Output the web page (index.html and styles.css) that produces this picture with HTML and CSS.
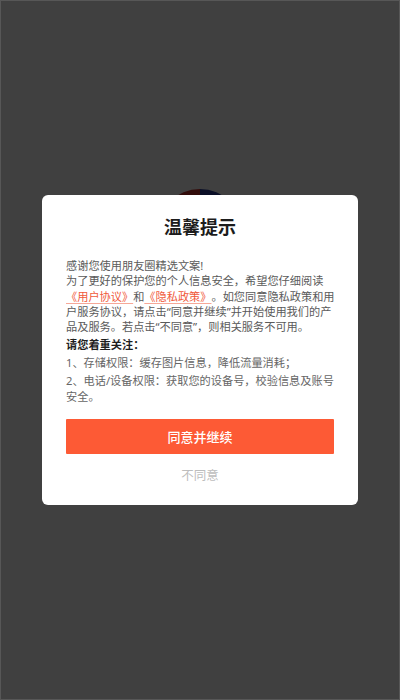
FILE: index.html
```html
<!DOCTYPE html>
<html lang="zh-CN">
<head>
<meta charset="utf-8">
<link rel="stylesheet" href="styles.css">
</head>
<body>
<div class="screen">
  <div class="splash">
    <div class="logo"></div>
  </div>
  <div class="overlay">
    <div class="dialog">
      <h2 class="title">温馨提示</h2>
      <p class="text">感谢您使用朋友圈精选文案!<br>为了更好的保护您的个人信息安全，希望您仔细阅读<br><a class="link">《用户协议》</a>和<a class="link">《隐私政策》</a>。如您同意隐私政策和用<br>户服务协议，请点击“同意并继续”并开始使用我们的产<br>品及服务。若点击“不同意”，则相关服务不可用。</p>
      <p class="heading">请您着重关注：</p>
      <p class="item">1、存储权限：缓存图片信息，降低流量消耗；</p>
      <p class="item">2、电话/设备权限：获取您的设备号，校验信息及账号<br>安全。</p>
      <button class="agree">同意并继续</button>
      <div class="disagree">不同意</div>
    </div>
  </div>
</div>
</body>
</html>
```
FILE: styles.css
```css
* { box-sizing: border-box; }
html, body { margin: 0; padding: 0; }
body {
  font-family: "Noto Sans", "Noto Sans CJK SC", sans-serif;
  background: #fff;
}
.screen {
  position: relative;
  width: 400px;
  height: 700px;
  overflow: hidden;
  background: #fff;
}
.splash {
  display: flex;
  justify-content: center;
  padding-top: 189px;
}
.logo {
  width: 86px;
  height: 86px;
  border-radius: 50%;
  background: linear-gradient(90deg, #c8302a 0 50%, #2c3f9a 50% 100%);
}
.overlay {
  position: absolute;
  inset: 0;
  background: rgba(0, 0, 0, 0.75);
  box-shadow: inset 0 0 0 1px #575757;
  display: flex;
  align-items: center;
  justify-content: center;
}
.dialog {
  width: 316px;
  background: #fff;
  border-radius: 6px;
  padding: 20px 24px 20px;
  display: flex;
  flex-direction: column;
  text-spacing-trim: space-all;
}
.title {
  margin: 0 0 19px;
  font-size: 18px;
  line-height: 24px;
  font-weight: 700;
  color: #1c1c1c;
  text-align: center;
}
.text, .heading, .item {
  margin: 0;
  font-size: 11.2px;
  line-height: 15.3px;
  white-space: nowrap;
}
.text { color: #5a5a5a; }
.link {
  color: #f0593a;
  text-decoration: underline;
  text-decoration-color: #f6a898;
  text-underline-offset: 2px;
}
.heading {
  margin-top: 2px;
  color: #1e1e1e;
  font-weight: 700;
}
.item {
  margin-top: 3px;
  color: #666;
}
.agree {
  margin-top: 15px;
  height: 35px;
  border: none;
  border-radius: 1px;
  background: #fd5a35;
  color: #fff;
  font-family: inherit;
  font-size: 13px;
  font-weight: 500;
  padding: 0;
}
.disagree {
  margin-top: 13px;
  line-height: 18px;
  font-size: 12.5px;
  color: #bdbdbd;
  text-align: center;
}
```
